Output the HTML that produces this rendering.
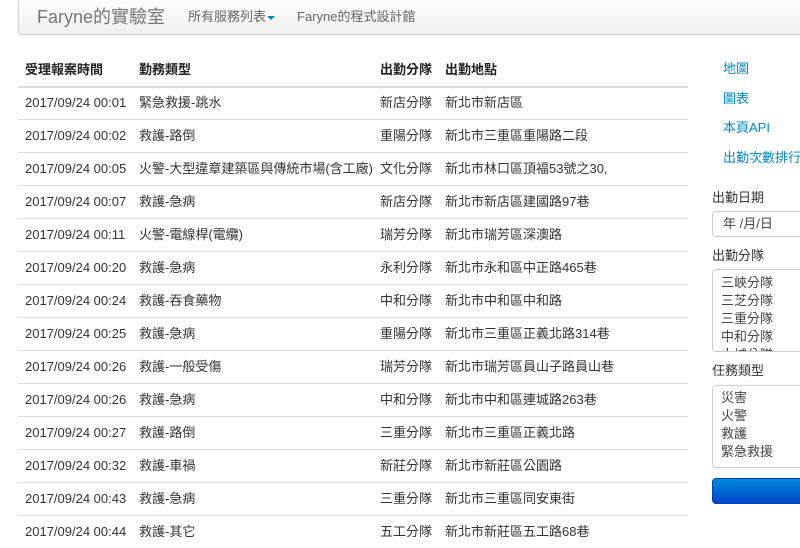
<!DOCTYPE html>
<html><head><meta charset="utf-8"><style>
*{margin:0;padding:0;box-sizing:border-box}
body{width:800px;height:535px;overflow:hidden;background:#fff;font-family:"Liberation Sans","Noto Sans CJK TC",sans-serif;font-size:13px;line-height:16px;color:#333;position:relative}
.nav{position:absolute;left:18px;top:-4px;width:800px;height:39px;background:linear-gradient(#fff,#f0f0f0);border:1px solid #d4d4d4;border-radius:4px;box-shadow:0 1px 3px rgba(0,0,0,.08)}
.brand{position:absolute;left:37px;top:6px;font-size:18px;line-height:22px;color:#777}
.ni{position:absolute;top:9px;font-size:13px;color:#666}
.caret{display:inline-block;border-top:4px solid #0088cc;border-left:4px solid transparent;border-right:4px solid transparent;vertical-align:middle;margin-left:1px}
.row{position:absolute;left:18px;width:670px;height:33px;border-top:1px solid #ddd}
.row span{position:absolute;top:8px;white-space:nowrap;line-height:16px}
.h span{font-weight:bold;color:#222}
.c1{left:7px}.c2{left:121px}.c3{left:362px}.c4{left:427px}
.lk{position:absolute;left:723px;color:#0088cc;font-size:13px;white-space:nowrap}
.lb{position:absolute;left:712px;font-size:13px;color:#333;white-space:nowrap}
.box{position:absolute;left:712px;width:100px;border:1px solid #ccc;border-radius:4px;background:#fff;font-size:13px;color:#444;padding:3px 8px;line-height:18px;overflow:hidden}
.btn{position:absolute;left:712px;top:478px;width:100px;height:26px;border-radius:4px;background:linear-gradient(#0088dd,#0044cc);border:1px solid #0044aa}
</style></head><body>
<div class="nav"></div>
<div class="brand">Faryne的實驗室</div>
<div class="ni" style="left:188px">所有服務列表<span class="caret"></span></div>
<div class="ni" style="left:297px">Faryne的程式設計館</div>

<div class="row h" style="top:54px;border-top:none"><span class="c1">受理報案時間</span><span class="c2">勤務類型</span><span class="c3">出勤分隊</span><span class="c4">出勤地點</span></div>
<div class="row" style="top:86px;border-top:2px solid #ddd"><span class="c1" style="top:7px">2017/09/24 00:01</span><span class="c2" style="top:7px">緊急救援-跳水</span><span class="c3" style="top:7px">新店分隊</span><span class="c4" style="top:7px">新北市新店區</span></div>
<div class="row" style="top:119px"><span class="c1">2017/09/24 00:02</span><span class="c2">救護-路倒</span><span class="c3">重陽分隊</span><span class="c4">新北市三重區重陽路二段</span></div>
<div class="row" style="top:152px"><span class="c1">2017/09/24 00:05</span><span class="c2">火警-大型違章建築區與傳統市場(含工廠)</span><span class="c3">文化分隊</span><span class="c4">新北市林口區頂福53號之30,</span></div>
<div class="row" style="top:185px"><span class="c1">2017/09/24 00:07</span><span class="c2">救護-急病</span><span class="c3">新店分隊</span><span class="c4">新北市新店區建國路97巷</span></div>
<div class="row" style="top:218px"><span class="c1">2017/09/24 00:11</span><span class="c2">火警-電線桿(電纜)</span><span class="c3">瑞芳分隊</span><span class="c4">新北市瑞芳區深澳路</span></div>
<div class="row" style="top:251px"><span class="c1">2017/09/24 00:20</span><span class="c2">救護-急病</span><span class="c3">永利分隊</span><span class="c4">新北市永和區中正路465巷</span></div>
<div class="row" style="top:284px"><span class="c1">2017/09/24 00:24</span><span class="c2">救護-吞食藥物</span><span class="c3">中和分隊</span><span class="c4">新北市中和區中和路</span></div>
<div class="row" style="top:317px"><span class="c1">2017/09/24 00:25</span><span class="c2">救護-急病</span><span class="c3">重陽分隊</span><span class="c4">新北市三重區正義北路314巷</span></div>
<div class="row" style="top:350px"><span class="c1">2017/09/24 00:26</span><span class="c2">救護-一般受傷</span><span class="c3">瑞芳分隊</span><span class="c4">新北市瑞芳區員山子路員山巷</span></div>
<div class="row" style="top:383px"><span class="c1">2017/09/24 00:26</span><span class="c2">救護-急病</span><span class="c3">中和分隊</span><span class="c4">新北市中和區連城路263巷</span></div>
<div class="row" style="top:416px"><span class="c1">2017/09/24 00:27</span><span class="c2">救護-路倒</span><span class="c3">三重分隊</span><span class="c4">新北市三重區正義北路</span></div>
<div class="row" style="top:449px"><span class="c1">2017/09/24 00:32</span><span class="c2">救護-車禍</span><span class="c3">新莊分隊</span><span class="c4">新北市新莊區公園路</span></div>
<div class="row" style="top:482px"><span class="c1">2017/09/24 00:43</span><span class="c2">救護-急病</span><span class="c3">三重分隊</span><span class="c4">新北市三重區同安東街</span></div>
<div class="row" style="top:515px"><span class="c1">2017/09/24 00:44</span><span class="c2">救護-其它</span><span class="c3">五工分隊</span><span class="c4">新北市新莊區五工路68巷</span></div>

<div class="lk" style="top:61px">地圖</div>
<div class="lk" style="top:91px">圖表</div>
<div class="lk" style="top:120px">本頁API</div>
<div class="lk" style="top:150px">出勤次數排行</div>
<div class="lb" style="top:190px">出勤日期</div>
<div class="box" style="top:211px;height:26px;padding-left:10px">年 /月/日</div>
<div class="lb" style="top:248px">出勤分隊</div>
<div class="box" style="top:269px;height:83px;padding-top:4px">三峽分隊<br>三芝分隊<br>三重分隊<br>中和分隊<br>土城分隊</div>
<div class="lb" style="top:363px">任務類型</div>
<div class="box" style="top:385px;height:83px;padding-top:3px">災害<br>火警<br>救護<br>緊急救援</div>
<div class="btn"></div>
</body></html>
